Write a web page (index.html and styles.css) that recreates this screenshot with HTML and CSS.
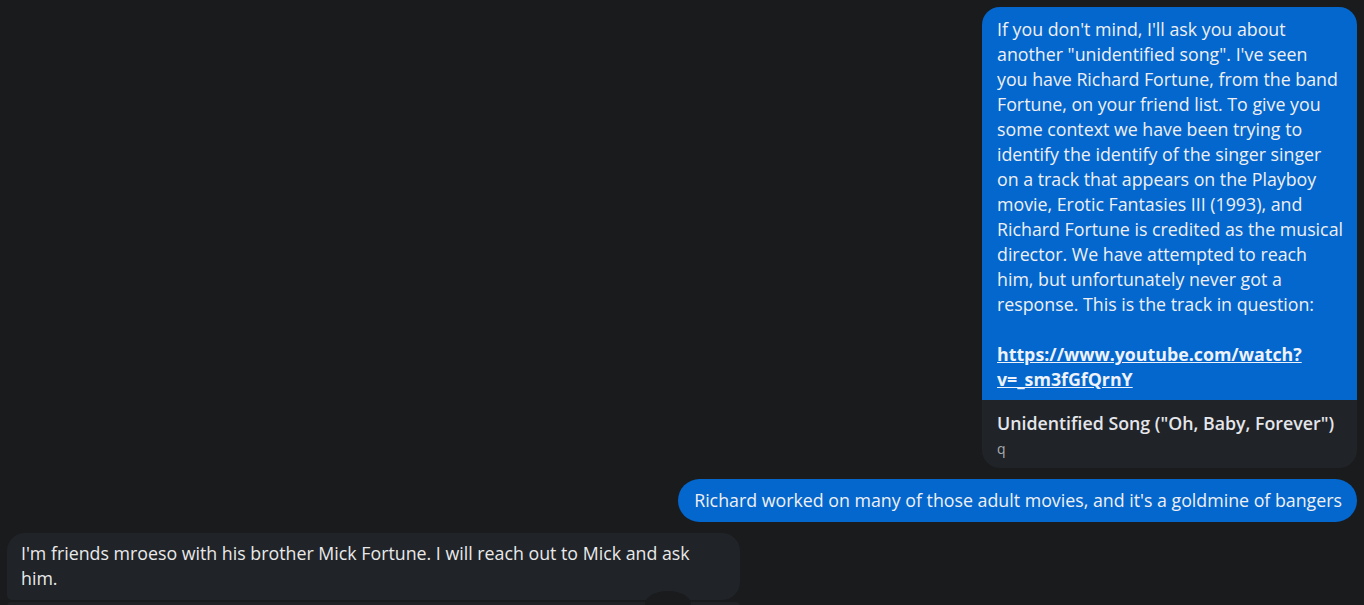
FILE: index.html
```html
<!DOCTYPE html>
<html>
<head>
<meta charset="utf-8">
<link rel="stylesheet" href="styles.css">
</head>
<body>
<div class="thread">
  <div class="row row-out">
    <div class="bubble bubble-card">
      <div class="card-text">
        <p>If you don't mind, I'll ask you about another "unidentified song". I've seen<br>you have Richard Fortune, from the band Fortune, on your friend list. To give you some context we have been trying to identify the identify of the singer singer on a track that appears on the Playboy movie, Erotic Fantasies III (1993), and Richard Fortune is credited as the musical director. We have attempted to reach him, but unfortunately never got a response. This is the track in question:</p>
        <p class="gap"><a class="link" href="#">https://www.youtube.com/watch?v=_sm3fGfQrnY</a></p>
      </div>
      <div class="preview">
        <div class="preview-title">Unidentified Song ("Oh, Baby, Forever")</div>
        <div class="preview-sub">q</div>
      </div>
    </div>
  </div>
  <div class="row row-out">
    <div class="bubble bubble-out bubble-pill">Richard worked on many of those adult movies, and it's a goldmine of bangers</div>
  </div>
  <div class="row row-in">
    <div class="bubble bubble-in">I'm friends mroeso with his brother Mick Fortune. I will reach out to Mick and ask him.<span class="notch"></span></div>
  </div>
  <div class="row row-in">
    <div class="bubble-next"></div>
  </div>
</div>
</body>
</html>
```
FILE: styles.css
```css
* { box-sizing: border-box; }
html, body {
  margin: 0;
  padding: 0;
  background: #1a1b1d;
  height: 100%;
  overflow: hidden;
}
body {
  font-family: "Open Sans", "Noto Sans", sans-serif;
  font-size: 17.8px;
  line-height: 25px;
  color: #e9e9ea;
}
.thread {
  display: flex;
  flex-direction: column;
  gap: 11px;
  padding: 7px 7px 0 7px;
}
.row { display: flex; }
.row-out { justify-content: flex-end; }
.row-in { justify-content: flex-start; }
.bubble {
  border-radius: 18px;
}
.bubble-out {
  background: #0367cd;
  color: #f0f0f4;
}
.bubble-card {
  width: 375px;
  overflow: hidden;
  background: #202327;
}
.card-text {
  background: #0367cd;
  color: #f0f0f4;
  padding: 10px 13px 8px 15px;
}
.card-text p { margin: 0; }
.card-text .gap { margin-top: 25px; }
.link {
  color: #eef2fa;
  font-weight: 700;
  text-decoration: underline;
}
.preview {
  padding: 11px 15px 6px 15px;
}
.preview-title {
  font-weight: 600;
  color: #e4e6eb;
}
.preview-sub {
  font-size: 14px;
  line-height: 26px;
  color: #a8abaf;
}
.bubble-pill {
  padding: 9px 15px 9px 16px;
  border-radius: 22px;
}
.bubble-in {
  position: relative;
  background: #202327;
  max-width: 733px;
  padding: 8px 14px 9px 14px;
  border-radius: 18px 18px 18px 5px;
}
.notch {
  position: absolute;
  left: 638px;
  bottom: -17px;
  width: 46px;
  height: 26px;
  border-radius: 50%;
  background: #1a1b1d;
}
.bubble-next {
  width: 733px;
  height: 10px;
  margin-top: -9px;
  background: #1f2124;
  border-radius: 4px 4px 0 0;
}
```
